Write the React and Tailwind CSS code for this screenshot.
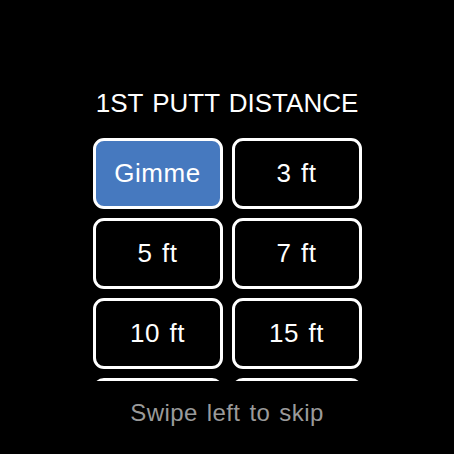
import React, { useState } from 'react'

const distances = ['Gimme', '3 ft', '5 ft', '7 ft', '10 ft', '15 ft']

function App() {
    const [selected, setSelected] = useState('Gimme')

    return (
        <div
            className="w-full h-[454px] bg-black text-white flex flex-col items-center"
            style={{ fontFamily: '"Liberation Sans", Arial, sans-serif' }}
        >
            {/* Title */}
            <div className="pt-[90px] text-[26px] leading-none [word-spacing:2px]">1ST PUTT DISTANCE</div>

            <div className="mt-[22px] h-[243px] overflow-hidden">
                <div className="grid grid-cols-[130px_130px] gap-[9px]">
                    {distances.map((d) => (
                        <button
                            key={d}
                            onClick={() => setSelected(d)}
                            className={`h-[71px] rounded-[11px] border-[3px] border-white flex items-center justify-center text-[26px] tracking-[0.5px] [word-spacing:2px] ${
                                selected === d ? 'bg-[#4679bf]' : 'bg-black'
                            }`}
                        >
                            {d}
                        </button>
                    ))}
                    <div className="h-[71px] rounded-[11px] border-[3px] border-white" />
                    <div className="h-[71px] rounded-[11px] border-[3px] border-white" />
                </div>
            </div>

            {/* Hint */}
            <div className="mt-[20px] text-[24px] leading-none text-[#9a9a9a] tracking-[0.4px] [word-spacing:2px]">Swipe left to skip</div>
        </div>
    )
}

export default App
